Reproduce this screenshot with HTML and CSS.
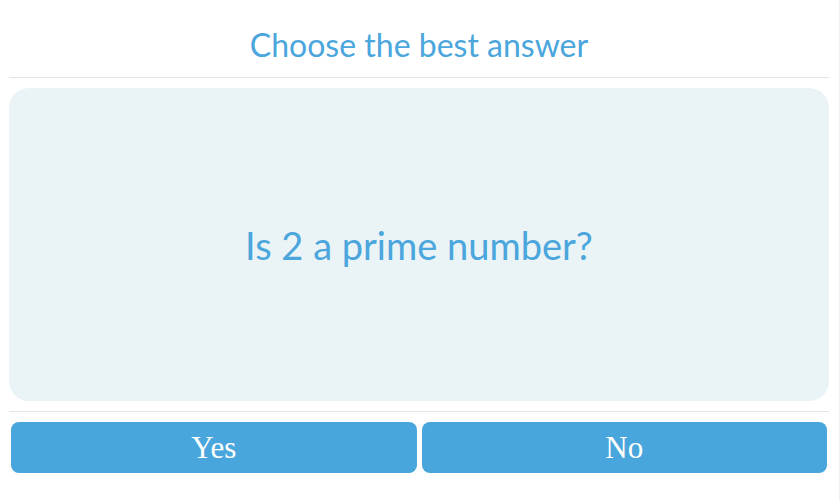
FILE: index.html
```html
<!DOCTYPE html>
<html lang="en">
<head>
    <meta charset="UTF-8">
    <meta name="viewport" content="width=device-width, initial-scale=1.0">
    <title>Quiz</title>
    <link rel="stylesheet" href="styles.css">
</head>
<body>
    <div class="quiz">
        <h1 class="title">Choose the best answer</h1>
        <hr class="divider">
        <div class="question-box">
            <p class="question">Is 2 a prime number?</p>
        </div>
        <hr class="divider">
        <div class="answers">
            <button class="answer">Yes</button>
            <button class="answer">No</button>
        </div>
    </div>
</body>
</html>
```

FILE: styles.css
```css
body {
    margin: 0;
    min-height: 501px;
    box-sizing: border-box;
    border-right: 1px dotted #e4e4e4;
    background: white;
    font-family: Lato, "Noto Sans", sans-serif;
}
.quiz {
    width: 820px;
    margin-left: 9px;
}
.title {
    margin: 0;
    height: 77px;
    line-height: 90px;
    font-size: 32px;
    font-weight: normal;
    color: #4aa6dc;
    text-align: center;
}
.divider {
    margin: 0;
    border: none;
    border-top: 1px solid #e2e4e8;
}
.question-box {
    margin: 10px 0;
    height: 313px;
    display: flex;
    align-items: center;
    justify-content: center;
    background-color: #eaf3f6;
    border-radius: 20px;
}
.question {
    margin: 0;
    font-size: 38px;
    color: #4aa6dc;
}
.answers {
    display: grid;
    grid-template-columns: 1fr 1fr;
    gap: 5px;
    padding: 10px 2px 0;
}
.answer {
    height: 51px;
    border: none;
    border-radius: 8px;
    background-color: #49a6dc;
    color: white;
    font-family: "Liberation Serif", serif;
    font-size: 31px;
    cursor: pointer;
}
```
